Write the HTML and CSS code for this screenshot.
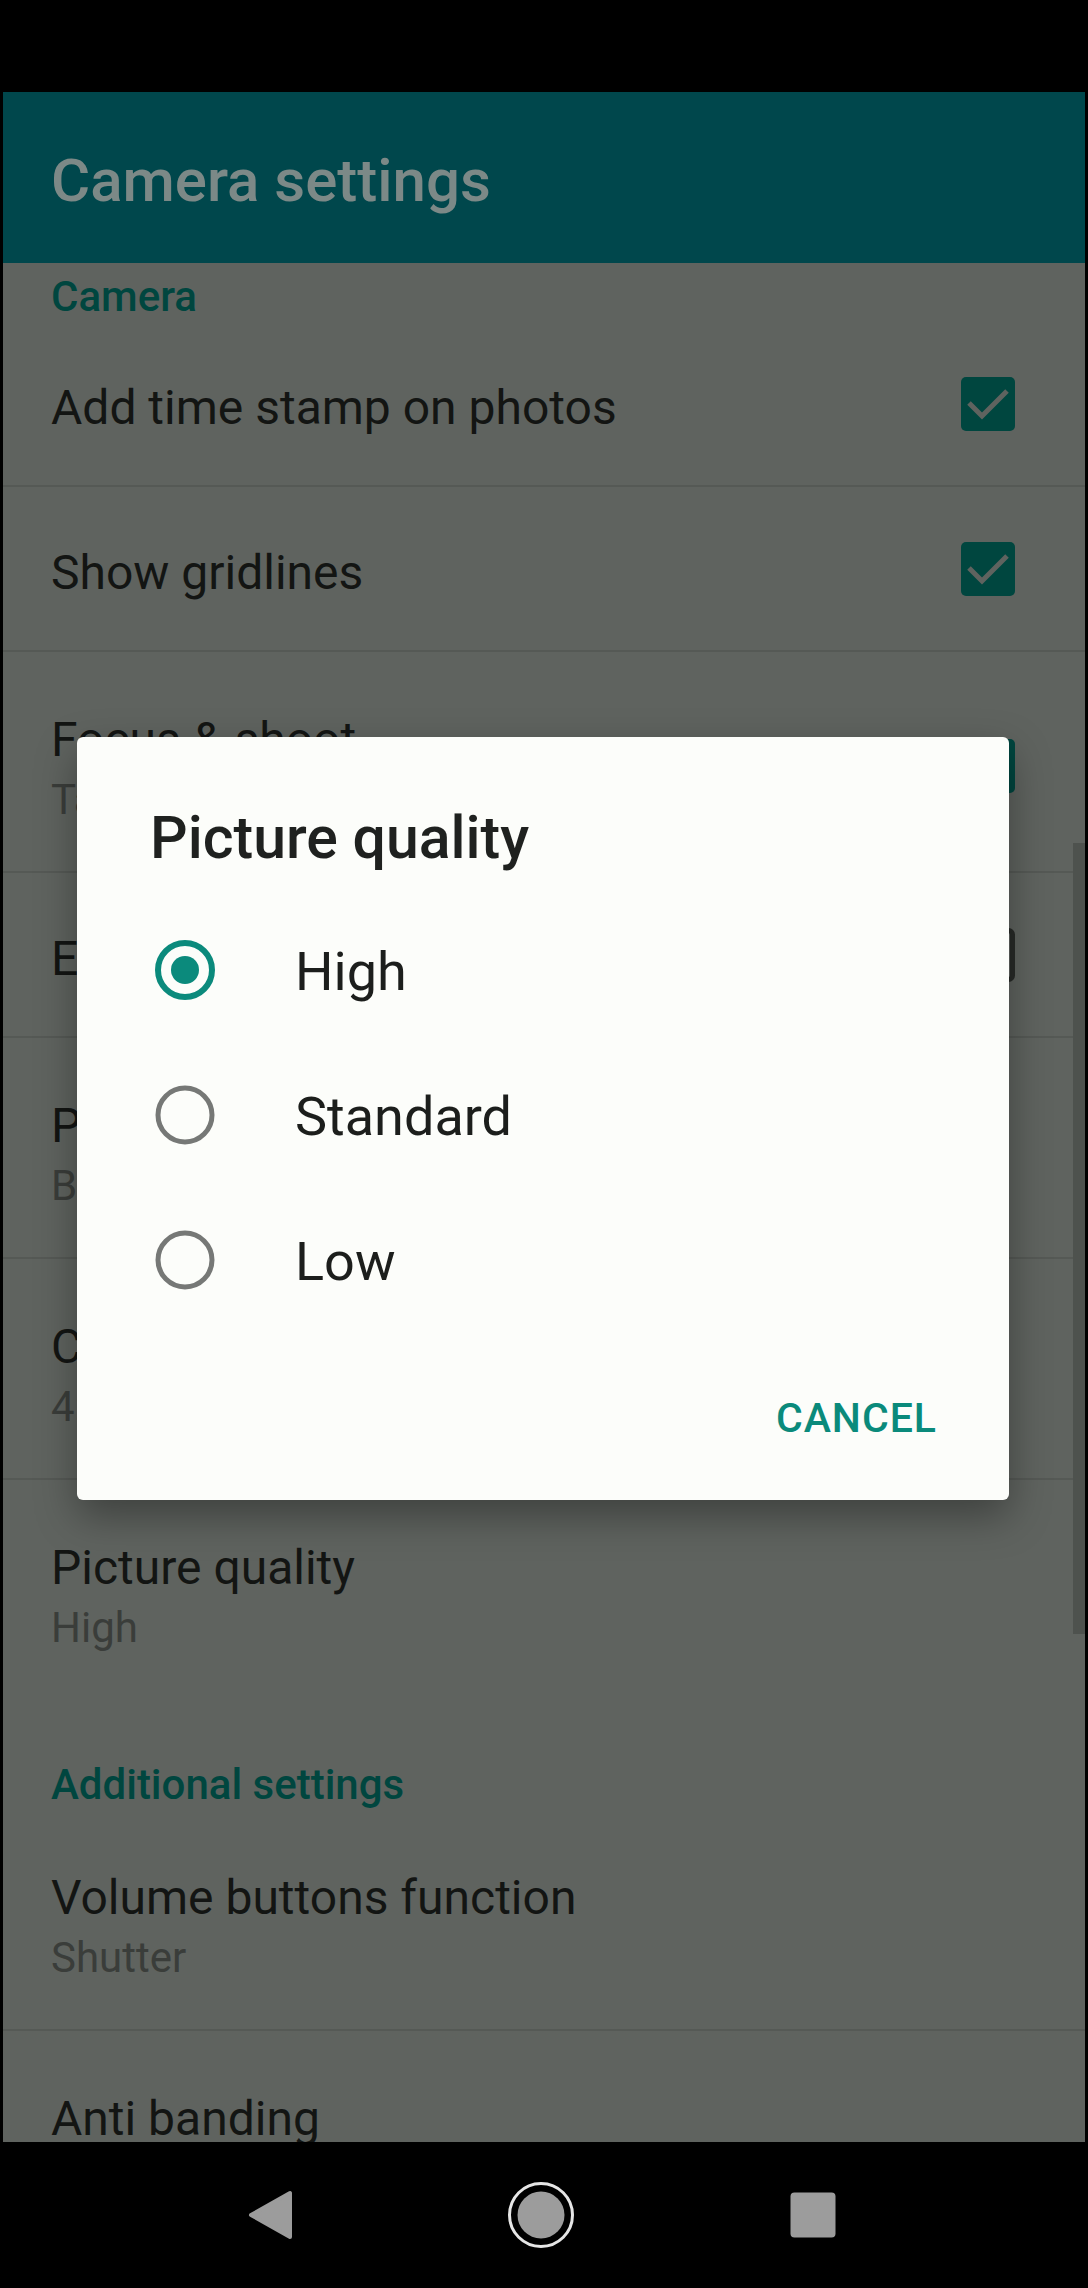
FILE: index.html
```html
<!DOCTYPE html>
<html lang="en">
<head>
  <meta charset="UTF-8" />
  <meta name="viewport" content="width=device-width, initial-scale=1.0" />
  <title>Camera settings</title>
  <link rel="stylesheet" href="styles.css">
</head>
<body>

  <div class="status-bar"></div>

  <div class="screen">
    <header class="app-bar">
      <h1 class="app-title">Camera settings</h1>
    </header>

    <div class="scroller">
      <div class="pref-list">
        <div class="pref-cat">Camera</div>

        <div class="pref single">
          <div class="pref-text">
            <div class="pref-title">Add time stamp on photos</div>
          </div>
          <svg class="check" viewBox="0 0 54 54"><rect x="0" y="0" width="54" height="54" rx="5" fill="#00463f"/><polyline points="8,26 21,39 46,14" fill="none" stroke="#5f635f" stroke-width="5"/></svg>
        </div>

        <div class="pref single">
          <div class="pref-text">
            <div class="pref-title">Show gridlines</div>
          </div>
          <svg class="check" viewBox="0 0 54 54"><rect x="0" y="0" width="54" height="54" rx="5" fill="#00463f"/><polyline points="8,26 21,39 46,14" fill="none" stroke="#5f635f" stroke-width="5"/></svg>
        </div>

        <div class="pref double">
          <div class="pref-text">
            <div class="pref-title">Focus &amp; shoot</div>
            <div class="pref-sum">Tap the screen to focus and shoot</div>
          </div>
          <svg class="check" viewBox="0 0 54 54"><rect x="0" y="0" width="54" height="54" rx="5" fill="#00463f"/><polyline points="8,26 21,39 46,14" fill="none" stroke="#5f635f" stroke-width="5"/></svg>
        </div>

        <div class="pref single">
          <div class="pref-text">
            <div class="pref-title">Enable shutter sound</div>
          </div>
          <svg class="check" viewBox="0 0 54 54"><rect x="2.5" y="2.5" width="49" height="49" rx="4" fill="none" stroke="#282b28" stroke-width="5"/></svg>
        </div>

        <div class="pref double">
          <div class="pref-text">
            <div class="pref-title">Preview size</div>
            <div class="pref-sum">Best fit</div>
          </div>
        </div>

        <div class="pref double">
          <div class="pref-text">
            <div class="pref-title">Camera resolution</div>
            <div class="pref-sum">4:3 (12 MP)</div>
          </div>
        </div>

        <div class="pref double last">
          <div class="pref-text">
            <div class="pref-title">Picture quality</div>
            <div class="pref-sum">High</div>
          </div>
        </div>

        <div class="pref-cat">Additional settings</div>

        <div class="pref double">
          <div class="pref-text">
            <div class="pref-title">Volume buttons function</div>
            <div class="pref-sum">Shutter</div>
          </div>
        </div>

        <div class="pref double">
          <div class="pref-text">
            <div class="pref-title">Anti banding</div>
            <div class="pref-sum">Auto</div>
          </div>
        </div>
      </div>

      <div class="scroll-thumb"></div>
    </div>
  </div>

  <nav class="nav-bar">
    <svg class="nav-icon" viewBox="0 0 80 80"><polygon points="61,18 61,62 22,40" fill="#9c9c9c" stroke="#9c9c9c" stroke-width="4" stroke-linejoin="round"/></svg>
    <svg class="nav-icon" viewBox="0 0 80 80"><circle cx="40" cy="40" r="31.5" fill="none" stroke="#e6e6e6" stroke-width="3"/><circle cx="40" cy="40" r="23.5" fill="#9c9c9c"/></svg>
    <svg class="nav-icon" viewBox="0 0 80 80"><rect x="17.5" y="17.5" width="45" height="45" rx="4" fill="#9c9c9c"/></svg>
  </nav>

  <div class="dialog">
    <h2 class="dialog-title">Picture quality</h2>
    <div class="radio-list">
      <div class="radio-item">
        <svg class="radio" viewBox="0 0 60 60"><circle cx="30" cy="30" r="27" fill="none" stroke="#0b8a7c" stroke-width="6"/><circle cx="30" cy="30" r="14" fill="#0b8a7c"/></svg>
        <span class="radio-label">High</span>
      </div>
      <div class="radio-item">
        <svg class="radio" viewBox="0 0 60 60"><circle cx="30" cy="30" r="27" fill="none" stroke="#767876" stroke-width="5"/></svg>
        <span class="radio-label">Standard</span>
      </div>
      <div class="radio-item">
        <svg class="radio" viewBox="0 0 60 60"><circle cx="30" cy="30" r="27" fill="none" stroke="#767876" stroke-width="5"/></svg>
        <span class="radio-label">Low</span>
      </div>
    </div>
    <div class="dialog-actions">
      <button class="text-button">CANCEL</button>
    </div>
  </div>

</body>
</html>
```

FILE: styles.css
```css
* {
  margin: 0;
  padding: 0;
  box-sizing: border-box;
  font-family: Roboto, "Noto Sans", sans-serif;
}

body {
  width: 1088px;
  height: 2288px;
  background: #000;
  overflow: hidden;
  position: relative;
}

.status-bar {
  height: 92px;
  background: #000;
}

.screen {
  height: 2050px;
  margin: 0 3px;
  display: flex;
  flex-direction: column;
  background: #5f635f;
}

.app-bar {
  height: 171px;
  flex-shrink: 0;
  background: #00474c;
  display: flex;
  align-items: center;
  padding-left: 48px;
}

.app-title {
  font-size: 60px;
  font-weight: 500;
  color: #7c8987;
  line-height: 70px;
  margin-top: 6px;
}

.scroller {
  flex: 1;
  position: relative;
  overflow: hidden;
}

/* list is scrolled down a bit */
.pref-list {
  margin-top: -50px;
}

.pref-cat {
  height: 109px;
  display: flex;
  align-items: flex-end;
  padding: 0 48px 4px;
  font-size: 42px;
  line-height: 42px;
  font-weight: 500;
  color: #00463f;
}

.pref {
  display: flex;
  align-items: center;
  padding: 0 70px 0 48px;
  border-bottom: 2px solid #555955;
}

.pref.single {
  height: 165px;
}

.pref.double {
  height: 221px;
  padding-top: 9px;
}

.pref.last {
  border-bottom-color: transparent;
}

.pref-text {
  flex: 1;
  padding-top: 8px;
}

.pref-title {
  font-size: 48px;
  line-height: 60px;
  color: #131513;
  white-space: nowrap;
}

.pref-sum {
  font-size: 42px;
  line-height: 60px;
  color: #3a3d3a;
  white-space: nowrap;
}

.check {
  width: 54px;
  height: 54px;
  flex-shrink: 0;
}

.scroll-thumb {
  position: absolute;
  right: 0;
  top: 580px;
  width: 12px;
  height: 791px;
  background: #4e524e;
}

.nav-bar {
  height: 146px;
  display: flex;
  align-items: center;
  padding-left: 229px;
}

.nav-icon {
  width: 80px;
  height: 80px;
  margin-right: 192px;
}

.dialog {
  position: absolute;
  left: 77px;
  top: 737px;
  width: 932px;
  height: 763px;
  background: #fcfdfa;
  border-radius: 6px;
  box-shadow: 0 16px 40px rgba(0, 0, 0, 0.35);
  padding-top: 66px;
}

.dialog-title {
  font-size: 59px;
  line-height: 70px;
  font-weight: 500;
  color: #1f211f;
  padding-left: 73px;
  margin-bottom: 24px;
}

.radio-item {
  height: 145px;
  display: flex;
  align-items: center;
  padding-left: 78px;
}

.radio {
  width: 60px;
  height: 60px;
  flex-shrink: 0;
}

.radio-label {
  margin-left: 80px;
  font-size: 54px;
  line-height: 60px;
  color: #1c1e1c;
  padding-top: 4px;
}

.dialog-actions {
  height: 168px;
  display: flex;
  justify-content: flex-end;
  align-items: center;
  padding: 4px 72px 0 0;
}

.text-button {
  background: none;
  border: none;
  font-size: 41px;
  line-height: 50px;
  font-weight: 500;
  letter-spacing: 1px;
  color: #0a8a7b;
}
```
